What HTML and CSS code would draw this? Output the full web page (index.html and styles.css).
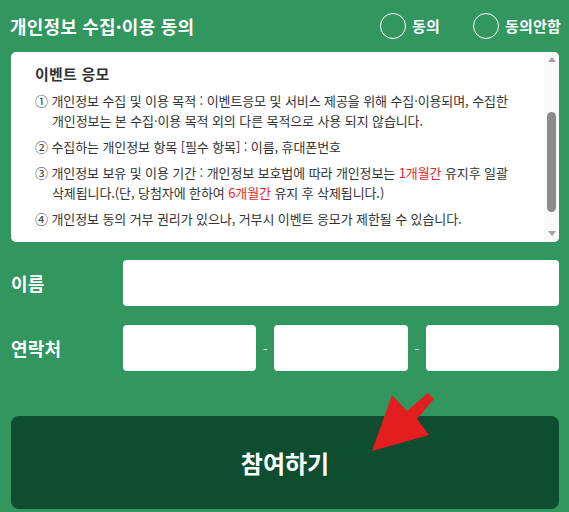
FILE: index.html
```html
<!DOCTYPE html>
<html lang="ko">
<head>
<meta charset="utf-8">
<link rel="stylesheet" href="styles.css">
</head>
<body>
<div class="page">
  <div class="header">
    <h2 class="title">개인정보 수집·이용 동의</h2>
    <div class="radios">
      <label class="radio"><span class="circle"></span><span class="rlabel">동의</span></label>
      <label class="radio"><span class="circle"></span><span class="rlabel">동의안함</span></label>
    </div>
  </div>
  <div class="terms">
    <div class="terms-body">
      <h3 class="terms-title">이벤트 응모</h3>
      <p class="item">① 개인정보 수집 및 이용 목적 : 이벤트응모 및 서비스 제공을 위해 수집·이용되며, 수집한 개인정보는 본 수집·이용 목적 외의 다른 목적으로 사용 되지 않습니다.</p>
      <p class="item">② 수집하는 개인정보 항목 [필수 항목] : 이름, 휴대폰번호</p>
      <p class="item">③ 개인정보 보유 및 이용 기간 : 개인정보 보호법에 따라 개인정보는 <span class="red">1개월간</span> 유지후 일괄 삭제됩니다.(단, 당첨자에 한하여 <span class="red">6개월간</span> 유지 후 삭제됩니다.)</p>
      <p class="item">④ 개인정보 동의 거부 권리가 있으나, 거부시 이벤트 응모가 제한될 수 있습니다.</p>
    </div>
    <div class="scrollbar">
      <span class="sb-up"></span>
      <div class="sb-track"><span class="sb-thumb"></span></div>
      <span class="sb-down"></span>
    </div>
  </div>
  <div class="form">
    <div class="row">
      <span class="label">이름</span>
      <div class="field"><input class="input" type="text"></div>
    </div>
    <div class="row">
      <span class="label">연락처</span>
      <div class="field phone">
        <input class="input" type="text">
        <span class="dash">-</span>
        <input class="input" type="text">
        <span class="dash">-</span>
        <input class="input" type="text">
      </div>
    </div>
  </div>
  <div class="submit-wrap">
    <button class="submit">참여하기</button>
    <svg class="arrow" width="80" height="70" viewBox="360 385 80 70">
      <polygon points="372,452 392,396 407,412 428,394 434,400 417,420 429,436" fill="#e41d1f"/>
    </svg>
  </div>
</div>
</body>
</html>
```

FILE: styles.css
```css
html, body {
  margin: 0;
  padding: 0;
}
body {
  background: #32965f;
  font-family: "Noto Sans CJK KR", "Noto Sans", sans-serif;
  width: 569px;
  height: 512px;
  overflow: hidden;
}
.page {
  display: flex;
  flex-direction: column;
}
.header {
  display: flex;
  align-items: center;
  justify-content: space-between;
  height: 51px;
  padding: 0 8px 0 10px;
}
.title {
  margin: 0;
  color: #fff;
  font-size: 18px;
  font-weight: 700;
  letter-spacing: 0.2px;
  line-height: 24px;
}
.radios {
  display: flex;
  align-items: center;
  gap: 33px;
}
.radio {
  display: flex;
  align-items: center;
  gap: 6px;
  color: #fff;
  font-size: 15px;
  font-weight: 700;
  letter-spacing: 0.2px;
}
.circle {
  width: 24px;
  height: 24px;
  border: 1.5px solid #fff;
  border-radius: 50%;
  box-sizing: content-box;
  display: block;
}
.terms {
  margin: 1px 10px 0 11px;
  height: 190px;
  background: #fff;
  border-radius: 5px;
  display: flex;
  overflow: hidden;
}
.terms-body {
  flex: 1;
  padding: 11px 10px 0 24px;
  color: #333;
}
.terms-title {
  margin: 0 0 6px;
  font-size: 15px;
  font-weight: 700;
  line-height: 22px;
  letter-spacing: 0.2px;
}
.item {
  margin: 0 0 6px;
  font-size: 13px;
  line-height: 20px;
  padding-left: 17px;
  text-indent: -17px;
  letter-spacing: -0.1px;
  word-break: keep-all;
}
.red {
  color: #ea1f2a;
}
.scrollbar {
  width: 15px;
  background: #f9f9f9;
  display: flex;
  flex-direction: column;
  align-items: center;
}
.sb-up, .sb-down {
  display: block;
  width: 0;
  height: 0;
  border-left: 4px solid transparent;
  border-right: 4px solid transparent;
}
.sb-up {
  margin-top: 5px;
  border-bottom: 5px solid #a3a3a3;
}
.sb-down {
  margin-bottom: 6px;
  border-top: 5px solid #a3a3a3;
}
.sb-track {
  flex: 1;
  width: 100%;
  display: flex;
  justify-content: center;
}
.sb-thumb {
  display: block;
  width: 9px;
  height: 100px;
  margin-top: 50px;
  background: #8b8b8b;
  border-radius: 5px;
}
.form {
  display: flex;
  flex-direction: column;
  gap: 19px;
  margin-top: 18px;
  padding: 0 10px 0 11px;
}
.row {
  display: flex;
  align-items: center;
}
.label {
  flex: none;
  width: 112px;
  color: #fff;
  font-size: 18px;
  font-weight: 700;
  letter-spacing: 0.2px;
}
.field {
  flex: 1;
  min-width: 0;
  display: flex;
  align-items: center;
}
.input {
  flex: 1 1 0;
  width: 0;
  min-width: 0;
  height: 46px;
  border: none;
  border-radius: 4px;
  background: #fff;
  margin: 0;
  padding: 0;
  box-sizing: border-box;
}
.dash {
  flex: none;
  width: 18px;
  text-align: center;
  color: #eeeeee;
  font-size: 13px;
}
.submit-wrap {
  position: relative;
  margin-top: 45px;
  padding: 0 10px 0 11px;
}
.submit {
  display: block;
  width: 100%;
  height: 93px;
  background: #0f4d31;
  border: none;
  border-radius: 8px;
  color: #fff;
  font-family: "Noto Sans CJK KR", "Noto Sans", sans-serif;
  font-size: 24px;
  font-weight: 700;
  letter-spacing: 0;
  padding: 0;
}
.arrow {
  position: absolute;
  left: 360px;
  top: -32px;
}
```
